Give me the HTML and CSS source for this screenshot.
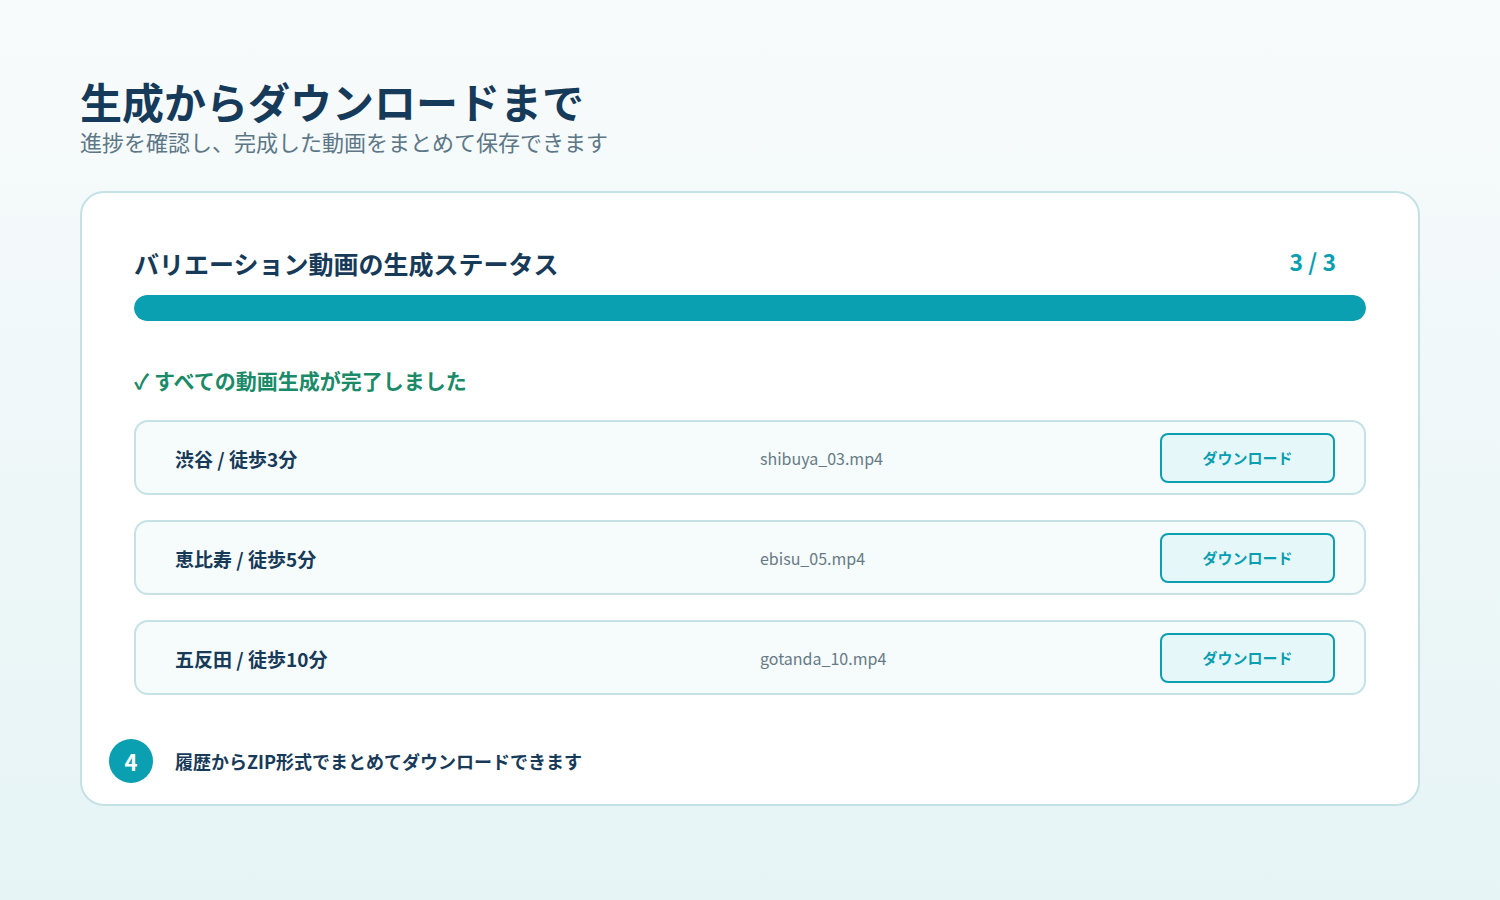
FILE: index.html
```html
<!DOCTYPE html>
<html lang="ja">
<head>
  <meta charset="UTF-8">
  <title>生成からダウンロードまで</title>
  <meta name="viewport" content="width=device-width, initial-scale=1.0">
  <link rel="stylesheet" href="styles.css">
</head>
<body>

<header class="page-head">
  <h1>生成からダウンロードまで</h1>
  <p class="lead">進捗を確認し、完成した動画をまとめて保存できます</p>
</header>

<section class="card">
  <div class="status-head">
    <h2>バリエーション動画の生成ステータス</h2>
    <span class="count">3 / 3</span>
  </div>
  <div class="bar"><div class="bar-fill" style="width: 100%"></div></div>

  <p class="done">✓ すべての動画生成が完了しました</p>

  <ul class="videos">
    <li class="video">
      <span class="video-name">渋谷 / 徒歩3分</span>
      <span class="video-file">shibuya_03.mp4</span>
      <button class="dl">ダウンロード</button>
    </li>
    <li class="video">
      <span class="video-name">恵比寿 / 徒歩5分</span>
      <span class="video-file">ebisu_05.mp4</span>
      <button class="dl">ダウンロード</button>
    </li>
    <li class="video">
      <span class="video-name">五反田 / 徒歩10分</span>
      <span class="video-file">gotanda_10.mp4</span>
      <button class="dl">ダウンロード</button>
    </li>
  </ul>

  <div class="note">
    <span class="step">4</span>
    <span class="note-text">履歴からZIP形式でまとめてダウンロードできます</span>
  </div>
</section>

</body>
</html>
```

FILE: styles.css
```css
* { box-sizing: border-box; margin: 0; padding: 0; }
html, body { height: 100%; }
body {
  font-family: "Noto Sans CJK JP", "Noto Sans", sans-serif;
  background: linear-gradient(180deg, #f8fbfc 0%, #e6f4f5 100%);
  color: #173a59;
  padding: 78px 80px 0;
}
.page-head h1 {
  font-size: 42px;
  font-weight: 700;
  line-height: 46px;
  color: #163a59;
}
.lead {
  font-size: 22px;
  line-height: 28px;
  color: #5d7787;
  margin-top: 3px;
}
.card {
  margin-top: 36px;
  width: 1340px;
  background: #fff;
  border: 2px solid #c4e1e5;
  border-radius: 24px;
  padding: 52px 52px 21px;
}
.status-head {
  display: flex;
  justify-content: space-between;
  align-items: center;
  height: 36px;
}
.status-head h2 {
  font-size: 25px;
  font-weight: 700;
  color: #173a59;
}
.count {
  font-size: 23px;
  font-weight: 700;
  color: #0a9fb0;
  padding-right: 30px;
  margin-bottom: 4px;
}
.bar {
  margin-top: 14px;
  height: 26px;
  border-radius: 13px;
  background: #e3f2f4;
  overflow: hidden;
}
.bar-fill {
  height: 100%;
  background: #0a9fb1;
  border-radius: 13px;
}
.done {
  margin-top: 44px;
  font-size: 21px;
  line-height: 30px;
  font-weight: 700;
  color: #1a8a68;
}
.videos {
  list-style: none;
  margin-top: 25px;
  display: flex;
  flex-direction: column;
  gap: 25px;
}
.video {
  display: grid;
  grid-template-columns: 584px 1fr 175px;
  align-items: center;
  height: 75px;
  padding: 0 29px 0 39px;
  background: #f6fbfc;
  border: 2px solid #c6e2e6;
  border-radius: 14px;
}
.video-name {
  font-size: 19px;
  font-weight: 700;
  color: #173a59;
  padding-top: 2px;
}
.video-file {
  font-size: 16px;
  color: #667a86;
  padding-left: 1px;
}
.dl {
  height: 50px;
  border: 2px solid #0b9fb0;
  border-radius: 8px;
  background: #e6f7fa;
  color: #0a9fb0;
  font-family: inherit;
  font-size: 15px;
  font-weight: 700;
  cursor: pointer;
}
.note {
  display: flex;
  align-items: center;
  gap: 22px;
  margin: 44px 0 0 -25px;
}
.step {
  width: 44px;
  height: 44px;
  border-radius: 50%;
  background: #0a9fb1;
  color: #fff;
  font-size: 22px;
  font-weight: 700;
  display: flex;
  align-items: center;
  justify-content: center;
}
.note-text {
  font-size: 18px;
  font-weight: 700;
  color: #173a59;
}
```
